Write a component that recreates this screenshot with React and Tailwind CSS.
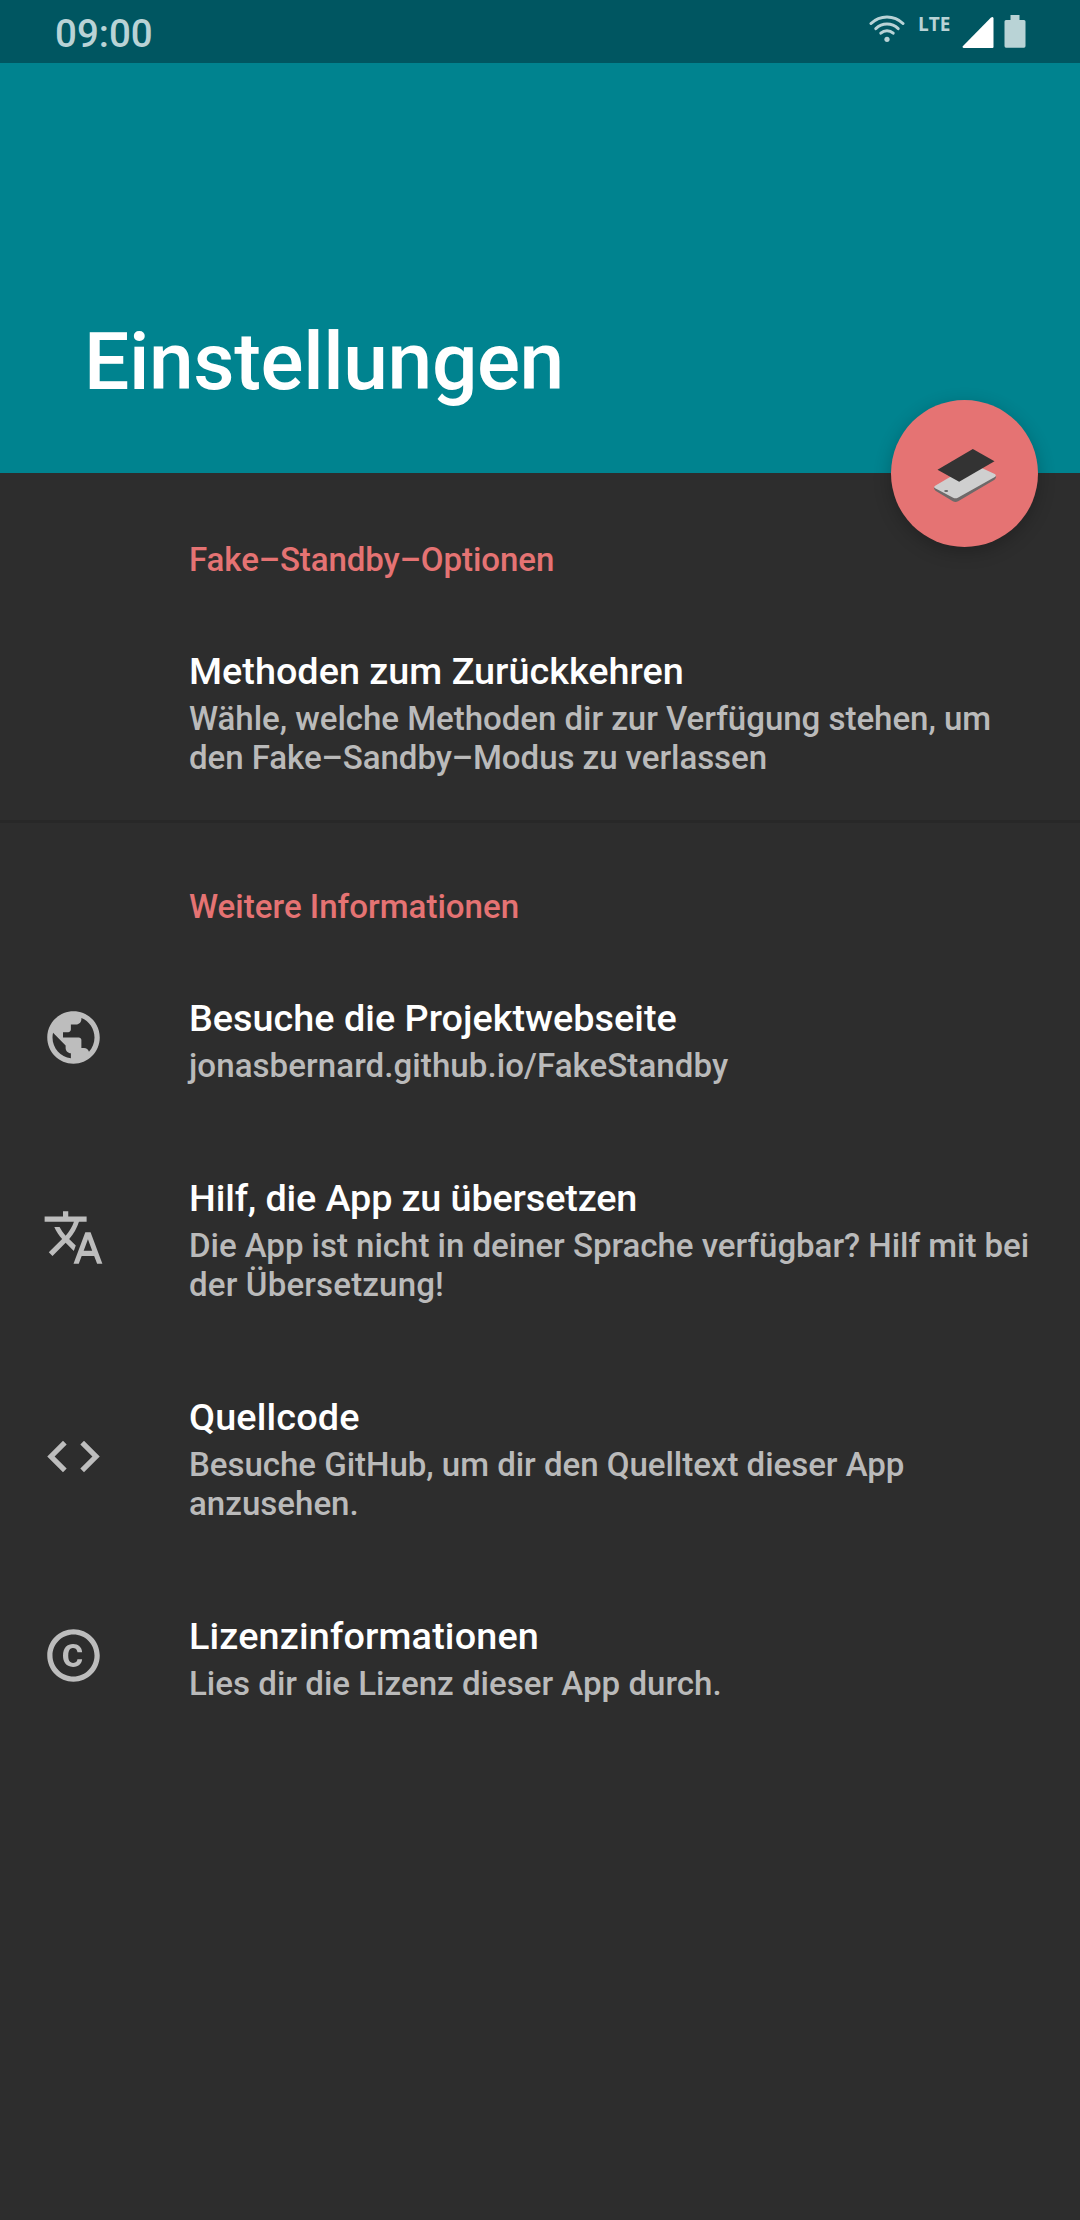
import { MdPublic, MdTranslate, MdCode, MdCopyright } from "react-icons/md";

function StatusBar() {
  return (
    <div className="flex h-[63px] items-start justify-between bg-[#005661] pl-[55px] pr-[54px] text-[#b9d3d6]">
      <span className="mt-[10px] text-[38.5px] font-medium leading-[48px]">09:00</span>
      <div className="flex items-start">
        <svg className="mt-[14px] h-[29px] w-[36px]" viewBox="0 0 36 29" fill="none" stroke="currentColor" strokeWidth="3" strokeLinecap="round">
          <path d="M2 9.5C11 .9 25 .9 34 9.5" />
          <path d="M6.8 14.6C13.2 8.6 22.8 8.6 29.2 14.6" />
          <path d="M11.8 19.2C15.4 15.9 20.6 15.9 24.2 19.2" />
          <circle cx="18" cy="25.3" r="2.6" fill="currentColor" stroke="none" />
        </svg>
        <span className="ml-[13px] mt-[12px] w-[32px] font-['Open_Sans'] text-[19px] font-bold leading-[24px]">LTE</span>
        <svg className="ml-[12px] mt-[16px] h-[33px] w-[32px] text-white" viewBox="0 0 32 33" fill="currentColor">
          <path d="M1 30 29 1.6Q31.5 0 31.5 2.5V31Q31.5 32 30.5 32H1.6Q-.2 31.6 1 30Z" />
        </svg>
        <svg className="ml-[10px] mt-[15px] h-[33px] w-[22px]" viewBox="0 0 22 33" fill="currentColor">
          <path d="M6.5 0H15.5V5H20Q21.5 5 21.5 6.5V31Q21.5 32.7 20 32.7H2Q.5 32.7 .5 31V6.500Q.5 5 2 5H6.500Z" />
        </svg>
      </div>
    </div>
  );
}

function StandbyIcon() {
  return (
    <svg className="h-[60px] w-[70px]" viewBox="208.5 189 210 180">
      <path d="M220 318Q220 326 225 329L277 361Q285 365 293 361L402 296Q407 293 407 285L300 330Z" fill="#6e6969" />
      <path d="M224 314 330 252Q337 249 344 252L403 279Q409 283 403 288L292 350Q285 354 278 350L224 322Q218 318 224 314Z" fill="#cfcfcf" />
      <ellipse cx="257" cy="330" rx="6" ry="3" fill="#666" />
      <path d="M337 204 402 241 296 302 231 266Z" fill="#333" />
    </svg>
  );
}

function Category({ title, divider, tracking = "" }) {
  return (
    <div className={divider ? "h-[128px] border-t-3 border-[#282828] pt-[64px]" : "h-[128px] pt-[67px]"}>
      <h2 className={`pl-[189px] text-[33.1px] font-medium leading-[39px] text-[#e57373] ${tracking}`}>{title}</h2>
    </div>
  );
}

function Preference({ icon: Icon, title, tracking = "", lines }) {
  return (
    <div className={lines.length > 1 ? "flex h-[219px]" : "flex h-[180px]"}>
      <div className="flex w-[189px] shrink-0 items-center pb-px pl-[42px] text-[#bdbdbd]">
        {Icon && <Icon className="size-[63px]" />}
      </div>
      <div className="pt-[48px] font-medium">
        <div className={`whitespace-nowrap text-[37.8px] leading-[44px] text-white ${tracking}`}>{title}</div>
        <div className="mt-[6px] text-[33.1px] leading-[39px] text-[#bababa]">
          {lines.map(({ text, tracking: lineTracking = "" }) => (
            <div key={text} className={`whitespace-nowrap ${lineTracking}`}>{text}</div>
          ))}
        </div>
      </div>
    </div>
  );
}

export default function App() {
  return (
    <div className="h-[2220px] w-[1080px] overflow-hidden bg-[#2d2d2d] font-['Roboto',sans-serif]">
      <StatusBar />
      <header className="relative flex h-[410px] items-end bg-[#00838f] pb-[64px] pl-[84px]">
        <h1 className="text-[80.3px] font-medium leading-[94px] tracking-[-0.4px] text-white">Einstellungen</h1>
        <button className="absolute -bottom-[74px] right-[42px] flex size-[147px] items-center justify-center rounded-full bg-[#e57373] shadow-[0_5px_18px_rgba(0,0,0,0.24)]">
          <StandbyIcon />
        </button>
      </header>
      <main>
        <Category title="Fake–Standby–Optionen" tracking="tracking-[-0.1px]" />
        <Preference
          title="Methoden zum Zurückkehren"
          lines={[
            { text: "Wähle, welche Methoden dir zur Verfügung stehen, um", tracking: "tracking-[-0.05px]" },
            { text: "den Fake–Sandby–Modus zu verlassen", tracking: "tracking-[-0.07px]" },
          ]}
        />
        <Category title="Weitere Informationen" divider />
        <Preference
          icon={MdPublic}
          title="Besuche die Projektwebseite"
          lines={[{ text: "jonasbernard.github.io/FakeStandby", tracking: "tracking-[0.055px]" }]}
        />
        <Preference
          icon={MdTranslate}
          title="Hilf, die App zu übersetzen"
          tracking="tracking-[-0.14px]"
          lines={[
            { text: "Die App ist nicht in deiner Sprache verfügbar? Hilf mit bei", tracking: "tracking-[-0.05px]" },
            { text: "der Übersetzung!", tracking: "tracking-[0.15px]" },
          ]}
        />
        <Preference
          icon={MdCode}
          title="Quellcode"
          tracking="tracking-[0.15px]"
          lines={[
            { text: "Besuche GitHub, um dir den Quelltext dieser App", tracking: "tracking-[-0.05px]" },
            { text: "anzusehen." },
          ]}
        />
        <Preference
          icon={MdCopyright}
          title="Lizenzinformationen"
          tracking="tracking-[0.15px]"
          lines={[{ text: "Lies dir die Lizenz dieser App durch." }]}
        />
      </main>
    </div>
  );
}
